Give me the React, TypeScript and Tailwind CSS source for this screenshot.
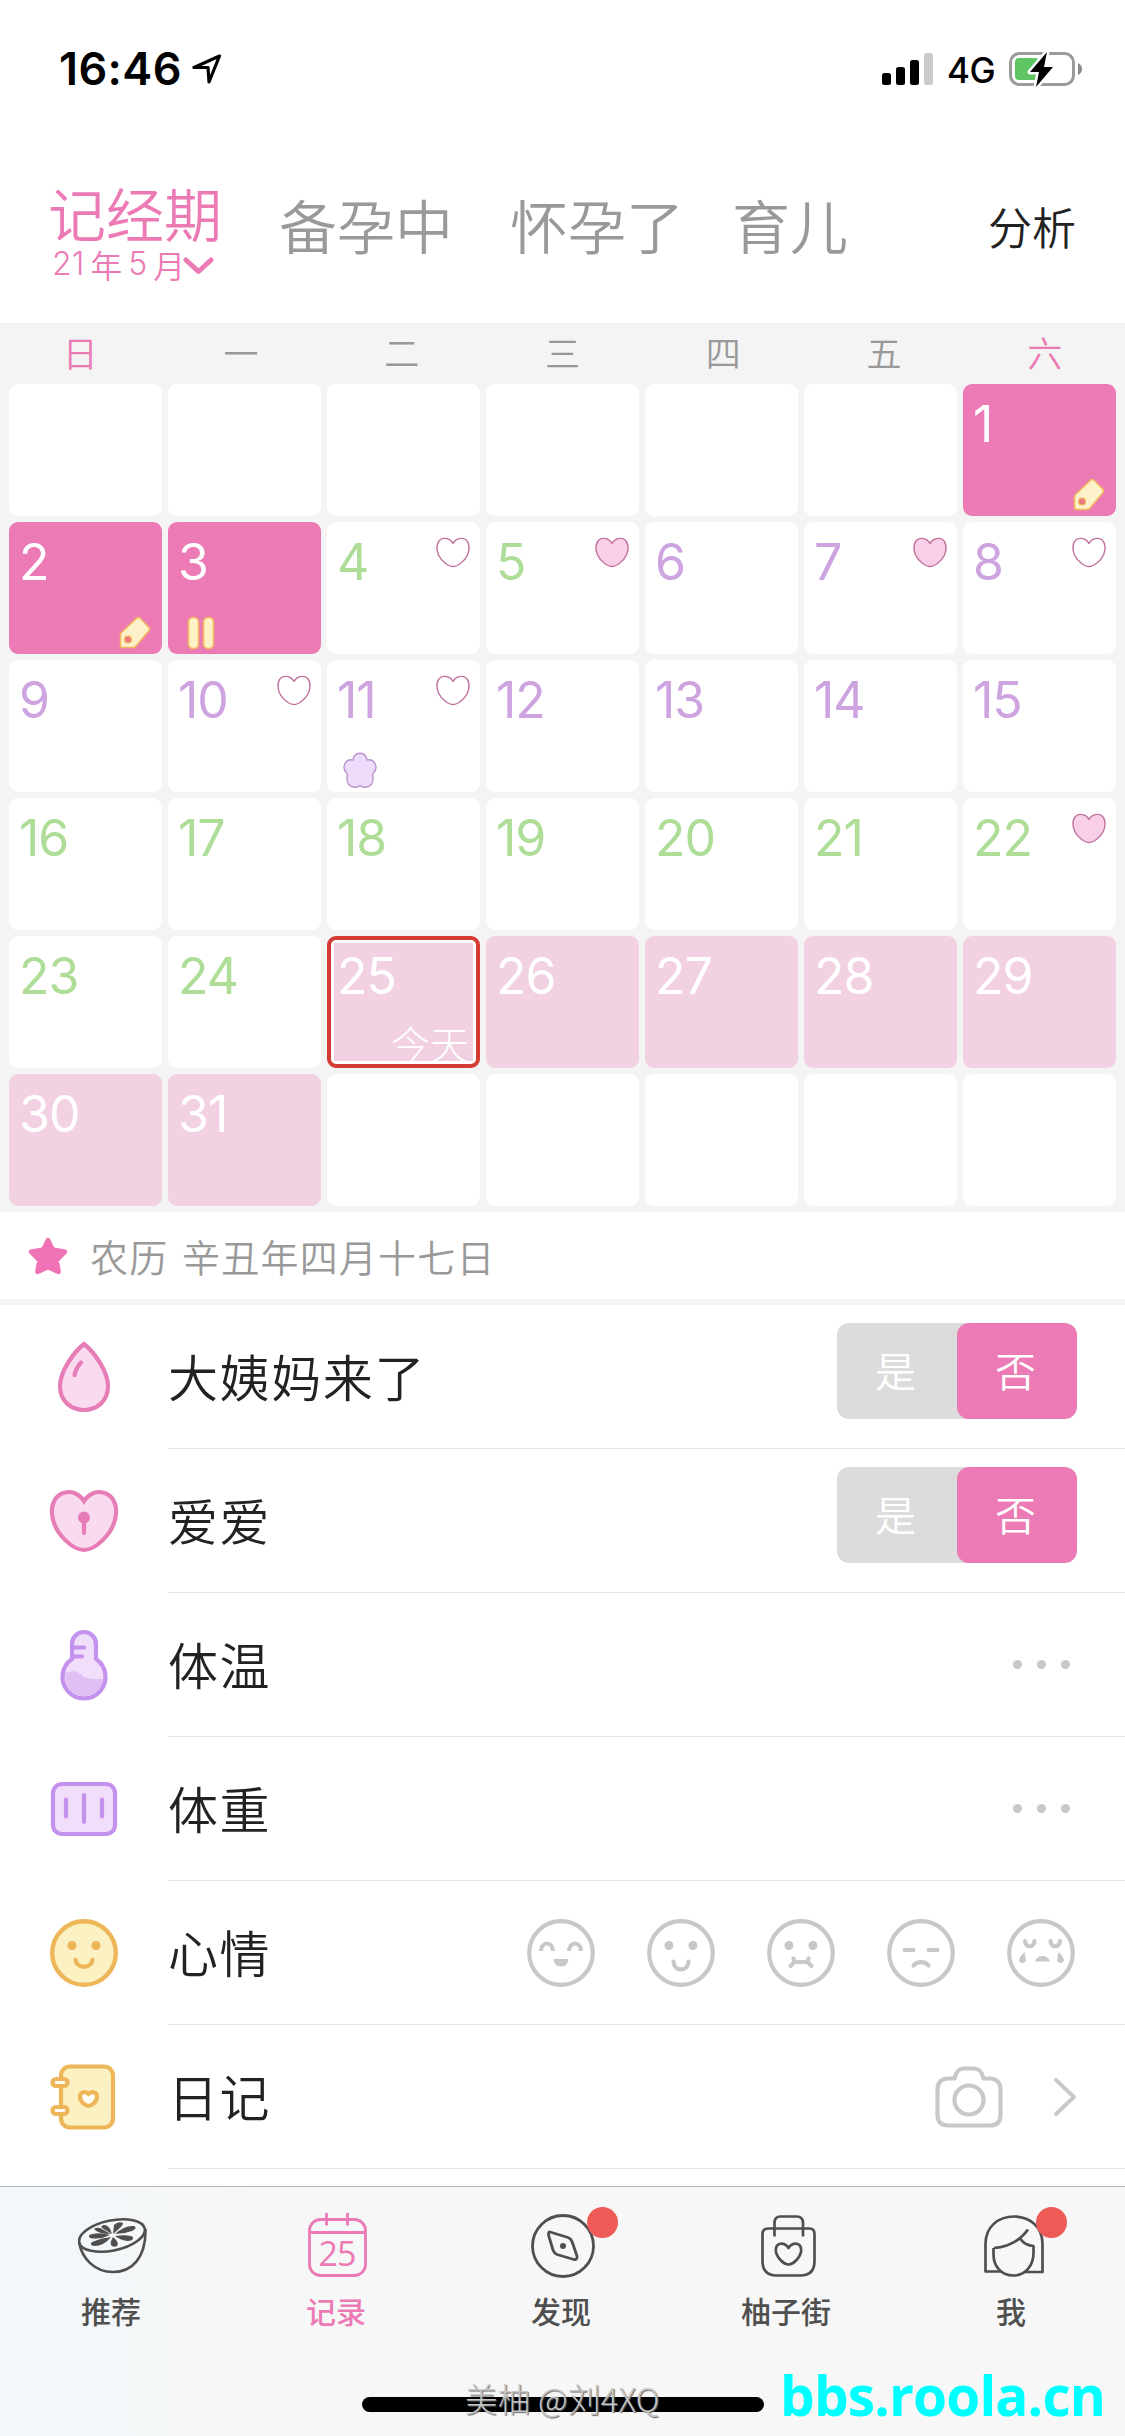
import type { ReactNode } from "react";
import clsx from "clsx";

type Mark = "tag" | "pause" | "heart" | "heartFilled" | "flower";

type Day = {
  day: number;
  kind: "period" | "safe" | "ovulation" | "forecast";
  marks?: Mark[];
  today?: boolean;
};

const weekdays = ["日", "一", "二", "三", "四", "五", "六"];

const marks: Record<number, Mark[]> = {
  1: ["tag"],
  2: ["tag"],
  3: ["pause"],
  4: ["heart"],
  5: ["heartFilled"],
  7: ["heartFilled"],
  8: ["heart"],
  10: ["heart"],
  11: ["heart", "flower"],
  22: ["heartFilled"],
};

function kindOf(day: number): Day["kind"] {
  if (day <= 3) return "period";
  if (day >= 25) return "forecast";
  if (day >= 6 && day <= 15) return "ovulation";
  return "safe";
}

// May 2021 starts on a Saturday, the grid always has six weeks
const cells: (Day | null)[] = Array.from({ length: 42 }, (_, i) => {
  const day = i - 5;
  if (day < 1 || day > 31) return null;
  return { day, kind: kindOf(day), marks: marks[day], today: day === 25 };
});

const textColor = {
  period: "text-white",
  forecast: "text-white",
  safe: "text-[#aedd98]",
  ovulation: "text-[#cda3e0]",
};

function StatusBar() {
  return (
    <div className="flex h-[138px] items-start justify-between pt-[50px] pr-[43px] pl-[59px] text-black">
      <div className="flex items-center">
        <span className="w-[133px] font-[Inter] text-[45px] leading-[38px] font-semibold tracking-[0.4px]">16:46</span>
        <svg width="30" height="30" viewBox="0 0 30 30" fill="none" stroke="#000" strokeWidth="3.200" strokeLinejoin="round">
          <path d="M27.500 2 L2 13.500 L16 13.500 L17 28 Z" />
        </svg>
      </div>
      <div className="flex items-start">
        <svg className="mt-[3px]" width="52" height="32" viewBox="0 0 52 32">
          <rect x="0" y="20" width="9" height="12" rx="2.500" />
          <rect x="14" y="14" width="9" height="18" rx="2.500" />
          <rect x="28" y="7" width="9" height="25" rx="2.500" />
          <rect x="42" y="0" width="9" height="32" rx="2.500" fill="#cbcbcb" />
        </svg>
        <span className="ml-[13px] w-[62px] font-[Inter] text-[35px] leading-[40px] font-medium tracking-[-0.5px]">4G</span>
        <svg className="mt-[1px]" width="73" height="38" viewBox="0 0 73 38">
          <rect x="1.500" y="2.500" width="63" height="31" rx="9" fill="none" stroke="#9b9b9b" strokeWidth="3" />
          <rect x="6" y="7" width="24" height="22" rx="4" fill="#5fc563" />
          <path d="M69 12 q4 2 4 6 t-4 6z" fill="#8a8a8a" />
          <path d="M38 1 L21 21 L30 21 L27 36 L44 16 L35 16 Z" fill="#000" stroke="#fff" strokeWidth="5" paintOrder="stroke" strokeLinejoin="round" />
        </svg>
      </div>
    </div>
  );
}

function Header() {
  return (
    <header className="flex h-[185px] items-start pr-[49px] pl-[48px] text-[58px] leading-[60px] font-[350] text-[#999]">
      <div className="w-[231px] pt-[44px] text-[#ec7ab5]">
        <div>记经期</div>
        <div className="mt-[3px] flex items-center pl-[4px] text-[32px] leading-[38px]">
          <span className="flex w-[131px] gap-[6px] whitespace-nowrap">
            <span className="font-[Inter]">21</span>
            <span>年</span>
            <span className="font-[Inter]">5</span>
            <span>月</span>
          </span>
          <svg className="mt-1" width="31" height="20" viewBox="0 0 31 20" fill="none" stroke="#ec7ab5" strokeWidth="5" strokeLinecap="round" strokeLinejoin="round">
            <path d="M3 4 L15.500 15.500 L28 4" />
          </svg>
        </div>
      </div>
      <div className="w-[231px] pt-[56px]">备孕中</div>
      <div className="w-[222px] pt-[56px]">怀孕了</div>
      <div className="pt-[56px]">育儿</div>
      <div className="ml-auto pt-[58px] text-[44px] text-[#222]">分析</div>
    </header>
  );
}

function Heart({ filled }: { filled?: boolean }) {
  return (
    <svg width="34" height="31" viewBox="0 0 34 31" fill={filled ? "#f9cfe8" : "#fff"} stroke="#c0709c" strokeWidth="1.400" strokeLinejoin="round">
      <path d="M17 6.500 C20 1 26 0.500 29.500 2.500 C33.500 5 34 12 31.500 18 C28.500 24.500 21 29.500 17 29.500 C13 29.500 5.500 24.500 2.500 18 C0 12 0.500 5 4.500 2.500 C8 0.500 14 1 17 6.500 Z" />
    </svg>
  );
}

function DayMark({ mark }: { mark: Mark }) {
  if (mark === "heart" || mark === "heartFilled") {
    return (
      <div className="absolute top-[15px] right-[10px]">
        <Heart filled={mark === "heartFilled"} />
      </div>
    );
  }
  if (mark === "tag") {
    return (
      <svg className="absolute right-[11px] bottom-[5px]" width="32" height="33" viewBox="0 0 32 33">
        <path d="M1.500 19 Q1.500 17.500 2.500 16.500 L18 2 Q19.500 1 21 2 L30 11.500 Q31 13 30 14.500 L17 30 Q16 31.500 14 31.500 L3.500 31.500 Q1.500 31.500 1.500 29.500 Z" fill="#fcf1c8" stroke="#f3b95d" strokeWidth="1.600" />
        <circle cx="9" cy="23.500" r="3.500" fill="#ec7a80" stroke="#f3b95d" strokeWidth="1.200" />
      </svg>
    );
  }
  if (mark === "pause") {
    return (
      <svg className="absolute bottom-[4px] left-[19px]" width="29" height="34" viewBox="0 0 29 34" fill="#fdf1c6" stroke="#f3b95d" strokeWidth="1.600">
        <rect x="1.500" y="1.500" width="10" height="31" rx="4.500" />
        <rect x="16.500" y="1.500" width="10" height="31" rx="4.500" />
      </svg>
    );
  }
  return (
    <svg className="absolute bottom-[4px] left-[16px]" width="34" height="36" viewBox="0 0 34 36" fill="#eddcfb" stroke="#bb93cc" strokeWidth="1.400" strokeLinejoin="round">
      <path d="M10 8 C11.500 -1 22.500 -1 24 8 C32 6.500 36 16 30 21.500 L29.500 23 C32 32 26 36 20.500 35 Q18.500 35 17 33.500 Q15.500 35 13.500 35 C8 36 2 32 4.500 23 L4 21.500 C-2 16 2 6.500 10 8 Z" />
    </svg>
  );
}

function DayCell({ cell }: { cell: Day | null }) {
  if (!cell) return <div className="rounded-[9px] bg-white" />;
  return (
    <div
      className={clsx(
        "relative rounded-[9px]",
        cell.kind === "period" && "bg-[#ec7ab5]",
        cell.kind === "forecast" && !cell.today && "bg-[#f1d1e2]",
        (cell.kind === "safe" || cell.kind === "ovulation") && "bg-white",
        cell.today && "border-4 border-[#d33b33] bg-white p-[3px]",
      )}
    >
      {cell.today ? (
        <div className="flex h-full flex-col justify-between bg-[#f1d1e2]">
          <span className="pt-[7px] pl-[3px] font-[Inter] text-[50px] leading-[52px] tracking-[-1px] text-white">{cell.day}</span>
          <span className="self-end pr-[4px] text-[39px] leading-[37px] font-light text-white">今天</span>
        </div>
      ) : (
        <span className={clsx("block pt-[14px] pl-[10px] font-[Inter] text-[50px] leading-[52px] tracking-[-1px]", textColor[cell.kind])}>
          {cell.day}
        </span>
      )}
      {cell.marks?.map((mark) => <DayMark key={mark} mark={mark} />)}
    </div>
  );
}

function Calendar() {
  return (
    <section className="h-[889px] bg-[#f4f4f4]">
      <div className="grid h-[61px] grid-cols-7 text-center text-[35px] leading-[58px] font-[350] text-[#999]">
        {weekdays.map((name, i) => (
          <div key={name} className={i === 0 || i === 6 ? "text-[#ec7ab5]" : ""}>{name}</div>
        ))}
      </div>
      <div className="grid auto-rows-[132px] grid-cols-7 gap-[6px] px-[9px]">
        {cells.map((cell, i) => <DayCell key={i} cell={cell} />)}
      </div>
    </section>
  );
}

function DropIcon() {
  return (
    <svg width="72" height="72" viewBox="0 0 72 72" fill="none" stroke="#e77db7" strokeWidth="4.200" strokeLinecap="round">
      <path d="M36 3 C46 11 60 30 60 45 C60 60 49 69 36 69 C23 69 12 60 12 45 C12 30 26 11 36 3 Z" fill="#f9daee" />
      <path d="M33 21.500 Q28 27 26.500 34" />
    </svg>
  );
}

function LockHeartIcon() {
  return (
    <svg width="72" height="72" viewBox="0 0 72 72" fill="none" stroke="#e77db7" strokeWidth="4.200" strokeLinecap="round">
      <path d="M36 16 C41 8 49 6 55 7.500 C65 10 69 19 68 29 C66 50 46 65 36 65 C26 65 6 50 4 29 C3 19 7 10 17 7.500 C23 6 31 8 36 16 Z" fill="#f9daee" />
      <circle cx="36" cy="32.500" r="6" fill="#e77db7" stroke="none" />
      <path d="M36 34 V48" />
    </svg>
  );
}

function ThermometerIcon() {
  return (
    <svg width="72" height="72" viewBox="0 0 72 72" fill="none" stroke="#c491ec" strokeWidth="4.200" strokeLinecap="round" strokeLinejoin="round">
      <path d="M24 30 V15 A12 12 0 0 1 48 15 V30 A21.500 21.500 0 1 1 24 30 Z" fill="#f0defb" />
      <path d="M17 44 C27 40 31 44 36 48 C42 51 49 50 55 50 C54 61 45 67 36 67 C25 67 17 59 17 44 Z" fill="#e0bff5" stroke="none" />
      <path d="M26 18.500 H36 M26 27.500 H34" />
    </svg>
  );
}

function WeightIcon() {
  return (
    <svg width="72" height="72" viewBox="0 0 72 72" fill="none" stroke="#c491ec" strokeWidth="4.200" strokeLinecap="round">
      <rect x="5" y="11" width="62" height="50" rx="9" fill="#f0defb" />
      <path d="M18 26.500 V43.500 M36 22 V49 M54 26.500 V43.500" />
    </svg>
  );
}

function SmileIcon() {
  return (
    <svg width="72" height="72" viewBox="0 0 72 72" fill="none" stroke="#edb658" strokeWidth="4.400" strokeLinecap="round">
      <circle cx="36" cy="36" r="31.800" fill="#fbf1c3" />
      <circle cx="24" cy="28.500" r="4.500" fill="#edb658" stroke="none" />
      <circle cx="48" cy="28.500" r="4.500" fill="#edb658" stroke="none" />
      <path d="M27.500 43 C29 52 43 52 44.500 43" />
    </svg>
  );
}

function DiaryIcon() {
  return (
    <svg width="72" height="72" viewBox="0 0 72 72" fill="none" stroke="#edb658" strokeWidth="4.200" strokeLinejoin="round">
      <rect x="13" y="5.500" width="52" height="61" rx="9" fill="#fbf1c3" />
      <rect x="4.500" y="18" width="15" height="7" rx="3.500" fill="#fffdf3" />
      <rect x="4.500" y="46" width="15" height="7" rx="3.500" fill="#fffdf3" />
      <path d="M40.500 33 C43 30 49 30.500 49 35.500 C49 41 43.500 45 40.500 45 C37.500 45 32 41 32 35.500 C32 30.500 38 30 40.500 33 Z" fill="#fffdf3" />
    </svg>
  );
}

function Toggle() {
  return (
    <div className="mb-3 flex h-24 w-60 overflow-hidden rounded-[12px] bg-[#dcdcdc] text-center text-[41px] leading-[92px] font-[350] text-white">
      <span className="w-[120px] pr-[3px]">是</span>
      <span className="w-[120px] rounded-[12px] bg-[#ec7ab5] pr-[3px]">否</span>
    </div>
  );
}

function More() {
  return (
    <div className="mr-[7px] flex gap-[15px]">
      <i className="size-[9px] rounded-full bg-[#c8c8c8]" />
      <i className="size-[9px] rounded-full bg-[#c8c8c8]" />
      <i className="size-[9px] rounded-full bg-[#c8c8c8]" />
    </div>
  );
}

function Face({ children }: { children: ReactNode }) {
  return (
    <svg width="68" height="68" viewBox="0 0 68 68" fill="none" stroke="#c8c8c8" strokeWidth="4.200" strokeLinecap="round">
      <circle cx="34" cy="34" r="31.800" />
      {children}
    </svg>
  );
}

function Moods() {
  return (
    <div className="mr-[2px] flex gap-[52px]">
      <Face>
        <path d="M14 32 C14.500 22 25.500 22 26 32 M42 32 C42.500 22 53.500 22 54 32" strokeLinecap="butt" />
        <path d="M26.500 40 H41.500 Q41 47.500 34 47.500 Q27 47.500 26.500 40 Z" fill="#c8c8c8" stroke="none" />
      </Face>
      <Face>
        <circle cx="22" cy="26.500" r="4.500" fill="#c8c8c8" stroke="none" />
        <circle cx="46" cy="26.500" r="4.500" fill="#c8c8c8" stroke="none" />
        <path d="M26.500 42.500 C27 53 41 53 41.500 42.500" />
      </Face>
      <Face>
        <circle cx="22" cy="26.500" r="4.500" fill="#c8c8c8" stroke="none" />
        <circle cx="46" cy="26.500" r="4.500" fill="#c8c8c8" stroke="none" />
        <path d="M23.500 47 L27.500 43 L26.500 39.500 M27.500 43 H40.500 L41.500 39.500 M40.500 43 L44.500 47" />
      </Face>
      <Face>
        <path d="M17.500 31 H26.500 M41.500 31 H50.500 M26.500 46.500 C30 42 38 42 41.500 46.500" />
      </Face>
      <Face>
        <path d="M18 22 C18.500 29 27 29 27.500 22 M43.500 22 C44 29 52.500 29 53 22" />
        <path d="M17.500 33 L19 42 Q15 46 12 42 Q12 38 17.500 33 Z M51.500 33 L50 42 Q54 46 57 42 Q57 38 51.500 33 Z M28 42.500 Q30 37 35.500 37 Q41 37 43 42.500 Z" fill="#c8c8c8" stroke="none" />
      </Face>
    </div>
  );
}

function DiaryActions() {
  return (
    <div className="flex items-center gap-[50px]">
      <svg width="68" height="64" viewBox="0 0 68 64" fill="none" stroke="#c8c8c8" strokeWidth="4.200">
        <path d="M13 13.500 H19.500 C21 6 24.500 3.500 29 3.500 H39 C43.500 3.500 47 6 48.500 13.500 H55 Q65.500 14 65.500 25 V50 Q65.500 60.500 55 60.500 H13 Q2.500 60.500 2.500 50 V25 Q2.500 14 13 13.500 Z" strokeLinejoin="round" />
        <circle cx="34" cy="35" r="14.500" />
      </svg>
      <svg width="24" height="40" viewBox="0 0 24 40" fill="none" stroke="#c8c8c8" strokeWidth="3.800" strokeLinecap="round" strokeLinejoin="round">
        <path d="M3 3 L21 20 L3 37" />
      </svg>
    </div>
  );
}

const rows = [
  { label: "大姨妈来了", icon: <DropIcon />, action: <Toggle /> },
  { label: "爱爱", icon: <LockHeartIcon />, action: <Toggle /> },
  { label: "体温", icon: <ThermometerIcon />, action: <More /> },
  { label: "体重", icon: <WeightIcon />, action: <More /> },
  { label: "心情", icon: <SmileIcon />, action: <Moods /> },
  { label: "日记", icon: <DiaryIcon />, action: <DiaryActions /> },
];

function RecordList() {
  return (
    <ul className="h-[881px]">
      {rows.map((row) => (
        <li key={row.label} className="flex h-36 items-center">
          <div className="flex w-[168px] pl-[48px]">{row.icon}</div>
          <div className="flex h-full flex-1 items-center justify-between border-b border-[#e2e2e2] pr-[48px]">
            <span className="pb-[2px] text-[50px] font-[350] tracking-[1.6px] text-[#222]">{row.label}</span>
            {row.action}
          </div>
        </li>
      ))}
    </ul>
  );
}

function GrapefruitIcon() {
  return (
    <svg width="70" height="66" viewBox="1 0 70 66" fill="none" stroke="#4f4f4f" strokeWidth="2.600">
      <ellipse cx="35" cy="23.500" rx="33.500" ry="15" transform="rotate(-12 35 23.500)" />
      <path d="M2 30 C5 47 18 60 36 60 C55 60 69 46 68.500 17" />
      <g fill="#4f4f4f" stroke="none">
        <path d="M35 22 L25 16 Q23 13 28 13 Q33 14 35 22 Z" />
        <path d="M36 22 L37 13 Q41 9 46 11 Q47 13 36 22 Z" />
        <path d="M38 22 Q48 13 57 14 Q61 16 55 19 Q47 22 38 22 Z" />
        <path d="M38 24 Q51 22 56 25 Q57 29 50 29 Q43 28 38 24 Z" />
        <path d="M36 25 Q43 31 40 34 Q36 36 34 33 Q33 30 36 25 Z" />
        <path d="M34 25 Q27 34 17 34 Q12 33 15 30 Q24 26 34 25 Z" />
        <path d="M33 23 Q23 28 13 26 Q10 23 15 22 Q24 20 33 23 Z" />
        <path d="M34 22 Q21 22 17 17 Q19 15 23 16 Z" />
      </g>
    </svg>
  );
}

function CalendarIcon() {
  return (
    <div className="relative">
      <svg width="60" height="66" viewBox="0 0 60 66" fill="none" stroke="#ec7ab5" strokeWidth="2.800">
        <rect x="1.500" y="7.500" width="56" height="56" rx="11" />
        <path d="M1.500 20.500 H57.500 M18.500 1 V13.500 M39.500 1 V13.500" />
      </svg>
      <span className="absolute inset-x-0 top-[23px] pr-[1px] text-center font-['Open_Sans'] text-[34px] leading-[36px] font-normal tracking-[-1px]">25</span>
    </div>
  );
}

function CompassIcon() {
  return (
    <svg width="66" height="66" viewBox="0 0 66 66" fill="none" stroke="#4f4f4f" strokeWidth="2.800" strokeLinejoin="round">
      <circle cx="33" cy="34" r="30.500" />
      <path d="M20 20 L38 25.500 Q41 26.500 42 29.500 L47 44 Q47.500 48 44 47.500 L27 42.500 Q24 41 23 38 L18.500 23 Q18.500 19.500 20 20 Z" />
      <circle cx="33" cy="34" r="3" fill="#4f4f4f" stroke="none" />
    </svg>
  );
}

function BagIcon() {
  return (
    <svg width="56" height="66" viewBox="-1.500 0 56 66" fill="none" stroke="#4f4f4f" strokeWidth="2.700" strokeLinejoin="round">
      <path d="M7 16.500 H48 Q53 16.500 53 22 V49 Q53 63.500 39 63.500 H15 Q1 63.500 1 49 V22 Q1 16.500 7 16.500 Z" />
      <path d="M13 24.500 V11 Q13 4.500 19 4.500 H35 Q41.500 4.500 41.500 11 V24.500" />
      <path d="M27 36 C31 30 38 30.500 39.500 36 C41 44 32 52.500 27 52.500 C22 52.500 13 44 14.500 36 C16 30.500 23 30 27 36 Z" />
    </svg>
  );
}

function ProfileIcon() {
  return (
    <svg width="64" height="66" viewBox="-2 0 64 66" fill="none" stroke="#4f4f4f" strokeWidth="2.700" strokeLinejoin="round">
      <path d="M17.500 59.500 H2.500 V32 C2.500 15 15 4.500 31 4.500 C47 4.500 59.500 15 59.500 32 V60 H42" />
      <path d="M11 36 C25 35 36 30 45 17.500 M37.500 27 Q42 33.500 50.500 34 V41 C50.500 54 42 63.500 30.500 63.500 C18 63.500 10 54 10.500 41 V36" />
    </svg>
  );
}

const tabs = [
  { label: "推荐", icon: <GrapefruitIcon /> },
  { label: "记录", icon: <CalendarIcon />, active: true },
  { label: "发现", icon: <CompassIcon />, dot: true },
  { label: "柚子街", icon: <BagIcon /> },
  { label: "我", icon: <ProfileIcon />, dot: true },
];

function TabBar() {
  return (
    <nav className="relative h-[250px] border-t border-[#b2b2b2] bg-linear-to-r from-[#f3f7fa] via-[#f6f7f7] via-25% to-[#f7f7f7] to-60%">
      <div className="grid grid-cols-5 pt-[25px]">
        {tabs.map((tab) => (
          <div key={tab.label} className={clsx("flex flex-col items-center text-[30px] leading-[42px] font-medium", tab.active ? "text-[#ec7ab5]" : "text-[#4f4f4f]")}>
            <div className="relative flex h-[66px] items-center">
              {tab.icon}
              {tab.dot && <i className="absolute -top-[5px] -right-[22px] size-[31px] rounded-full bg-[#ee5b57]" />}
            </div>
            <span className="mt-[11px] mr-[3px]">{tab.label}</span>
          </div>
        ))}
      </div>
      <div className="absolute top-[210px] left-[362px] h-[15px] w-[402px] rounded-full bg-black" />
      <span className="absolute top-[189px] left-[465px] text-[32.5px] leading-[44px] font-light tracking-[0.3px] whitespace-nowrap text-[#c6c6c6] [text-shadow:1px_1px_1px_#666]">美柚 @刘4XQ</span>
      <span className="absolute top-[178px] left-[780px] font-['Open_Sans'] text-[55px] leading-[60px] font-bold tracking-[-0.9px] text-[#00ffff]">bbs.roola.cn</span>
    </nav>
  );
}

export default function App() {
  return (
    <main className="h-[2436px] w-[1125px] overflow-hidden bg-white font-['Noto_Sans_CJK_SC',sans-serif]">
      <StatusBar />
      <Header />
      <Calendar />
      <div className="flex h-[93px] items-center border-b-6 border-[#f5f5f5] pl-[28px] text-[38px] font-[350] tracking-[1.2px] text-[#999]">
        <svg width="40" height="40" viewBox="0 0 38 38" fill="#f072b6" stroke="#f072b6" strokeWidth="4.500" strokeLinejoin="round">
          <path d="M19 4 L23.500 13 L35 15 L27 23 L29 34 L19 29.500 L9 34 L11 23 L3 15 L14.500 13 Z" />
        </svg>
        <span className="ml-[22px] [word-spacing:4px]">农历 辛丑年四月十七日</span>
      </div>
      <RecordList />
      <TabBar />
    </main>
  );
}
